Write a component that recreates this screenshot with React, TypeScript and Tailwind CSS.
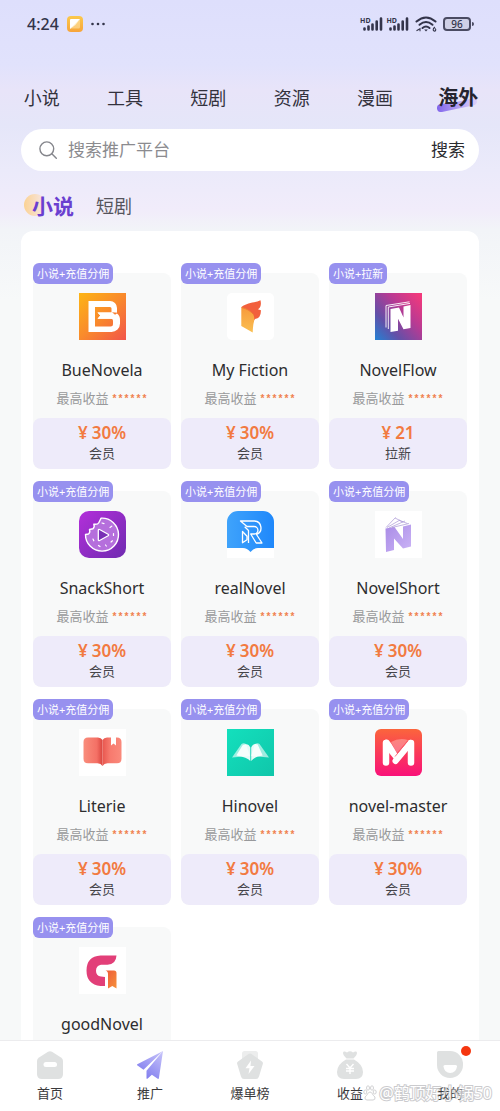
import React from 'react';

type Platform = {
  name: string;
  tag: string;
  price: string;
  kind: string;
  Logo: () => React.ReactElement;
};

function Tile({ children }: { children: React.ReactNode }) {
  return (
    <svg viewBox="0 0 47 47" className="block h-[47px] w-[47px]" aria-hidden="true">
      {children}
    </svg>
  );
}

function BueNovelaLogo() {
  return (
    <Tile>
      <defs>
        <linearGradient id="bue" gradientUnits="userSpaceOnUse" x1="0" y1="0" x2="47" y2="47">
          <stop offset="0" stopColor="#fdb515" />
          <stop offset="0.5" stopColor="#f98a2c" />
          <stop offset="1" stopColor="#f2544a" />
        </linearGradient>
      </defs>
      <rect width="47" height="47" fill="url(#bue)" />
      <path d="M9.500 8H31a7 7 0 0 1 7 7v5.500A8 8 0 0 1 41 27v3.500a8.500 8.500 0 0 1-8.500 8.500H9.500z" fill="#fff" />
      <path d="M16 14H31q1.500 0 1.500 1.500V19.500H18.500l2.800 3-2.800 3.300H32q2 0 2 2V31q0 2.500-2.500 2.500H16z" fill="url(#bue)" />
      <path d="M18.500 19.500H33l2 2.500-2 3.800H18.500l2.800-3.300z" fill="#fff" />
      <path d="M33 19.200l6 .6-3 2z" fill="url(#bue)" />
    </Tile>
  );
}

function MyFictionLogo() {
  return (
    <Tile>
      <defs>
        <linearGradient id="ficA" x1="0" y1="0" x2="0" y2="1">
          <stop offset="0" stopColor="#f79a3c" />
          <stop offset="1" stopColor="#fac052" />
        </linearGradient>
      </defs>
      <rect width="47" height="47" rx="5" fill="#fff" />
      <path d="M14.500 14C20 9.500 28 10 33.500 7.200Q35 13.500 31 16.300Q32.500 17.200 33.800 17Q34.500 25 28 26L25 31 15 15z" fill="#f2603d" />
      <path d="M14.300 14.500Q20 15 25.500 20.500Q28 23.500 27 28.500Q26 32 25.700 39.500L14.300 33z" fill="url(#ficA)" />
      <path d="M14.500 14.500Q22 16 27 22" fill="none" stroke="#ee7a35" strokeWidth="1" />
    </Tile>
  );
}

function NovelFlowLogo() {
  return (
    <Tile>
      <defs>
        <linearGradient id="flow" x1="0" y1="1" x2="1" y2="0.1">
          <stop offset="0" stopColor="#2382d4" />
          <stop offset="0.3" stopColor="#6350a8" />
          <stop offset="0.65" stopColor="#b83a93" />
          <stop offset="1" stopColor="#f2397c" />
        </linearGradient>
      </defs>
      <rect width="47" height="47" fill="url(#flow)" />
      <path d="M11 34.500V12.500L34.500 8.800" fill="none" stroke="#fff" strokeWidth="0.900" />
      <path d="M13.300 36V14L35 10.400" fill="none" stroke="#fff" strokeWidth="0.900" />
      <path d="M15.500 16l8.500-1.500 4.500 10V13.500L35.500 12v23l-7 1.300-5.500-10.500v12L15.500 39z" fill="#fff" />
    </Tile>
  );
}

function SnackShortLogo() {
  return (
    <Tile>
      <defs>
        <linearGradient id="snack" x1="0" y1="0" x2="1" y2="1">
          <stop offset="0" stopColor="#b32fda" />
          <stop offset="1" stopColor="#6f2bb0" />
        </linearGradient>
      </defs>
      <rect width="47" height="47" rx="10" fill="url(#snack)" />
      <path d="M22 7.200A16.500 16.500 0 1 1 6.500 23.500l3-.5q2-1.500 1-4.500l3.500-.8q2-2 .8-4.500 4 .5 5-1.500T22 7.200z" fill="#b56fdc" stroke="#fff" strokeWidth="1.400" strokeLinejoin="round" />
      <path d="M19.300 19.500q0-1.500 1.300-1l8.500 4.800q1 .7 0 1.400l-8.500 4.800q-1.300.5-1.300-1z" fill="#7930b5" stroke="#fff" strokeWidth="1.300" />
      <path d="M23 12l2 .6M31 16.500l1.800-1.400M34.500 22.500v2M14 28l.8 1.800M19.500 34.500l1.500 1M26.500 34l.8 1M32 31l1.500-1.200" stroke="#fff" strokeWidth="1.200" strokeLinecap="round" />
    </Tile>
  );
}

function RealNovelLogo() {
  return (
    <Tile>
      <defs>
        <linearGradient id="real" x1="0" y1="0" x2="1" y2="0">
          <stop offset="0" stopColor="#3fa3fb" />
          <stop offset="1" stopColor="#1f88fb" />
        </linearGradient>
      </defs>
      <path d="M0 30h47v17H0z" fill="#fff" />
      <path d="M0 11A11 11 0 0 1 11 0h25a11 11 0 0 1 11 11v26H31q-4 0-7.500 4Q20 37 16 37H0z" fill="url(#real)" />
      <path d="M13.500 10H27.500a7 7 0 0 1 2 13.500L35 32h-5.800l-5.500-9h3.500a3.500 3.500 0 0 0 0-7.500H20zM21.500 32V19.500l-3.800-3.800M15.500 20.500v11.300l4.500-3v-3.500z" fill="none" stroke="#fff" strokeWidth="1.300" strokeLinejoin="round" />
    </Tile>
  );
}

function NovelShortLogo() {
  return (
    <Tile>
      <defs>
        <linearGradient id="short" x1="0" y1="0" x2="1" y2="1">
          <stop offset="0" stopColor="#a98be6" />
          <stop offset="1" stopColor="#cbb4f6" />
        </linearGradient>
      </defs>
      <rect width="47" height="47" fill="#fff" />
      <path d="M10.500 17.500l9-1.500 8.500 12V15.500L36 13.500v22l-8 2L19 27.500V39l-8 2z" fill="url(#short)" />
      <path d="M11 16.500L20.500 6.500M12 16.500L25 9M14 17l16-7M17 16.500l17-4M20 7l8 4M24.500 9.500l8 3" fill="none" stroke="#a996d6" strokeWidth="0.700" />
    </Tile>
  );
}

function LiterieLogo() {
  return (
    <Tile>
      <defs>
        <linearGradient id="litA" x1="0" y1="0" x2="1" y2="0">
          <stop offset="0" stopColor="#f98d7c" />
          <stop offset="0.7" stopColor="#f47065" />
          <stop offset="1" stopColor="#d9453f" />
        </linearGradient>
        <linearGradient id="litB" x1="0" y1="0" x2="1" y2="0">
          <stop offset="0" stopColor="#e8574f" />
          <stop offset="0.4" stopColor="#f77a6e" />
          <stop offset="1" stopColor="#fa8a7c" />
        </linearGradient>
      </defs>
      <rect width="47" height="47" fill="#fff" />
      <path d="M9 8.500h10q3 0 4.500 2.500v26q-1.500-2.700-5-2.700H9q-4.500 0-4.500-4.500V13Q4.500 8.500 9 8.500z" fill="url(#litA)" />
      <path d="M38 8.500H28q-3 0-4.500 2.500v26q1.500-2.700 5-2.700H38q4.500 0 4.500-4.500V13q0-4.500-4.500-4.500z" fill="url(#litB)" />
      <path d="M32 7.500h5v9l-2.500-2-2.500 2z" fill="#fff" />
    </Tile>
  );
}

function HinovelLogo() {
  return (
    <Tile>
      <defs>
        <linearGradient id="hi" x1="0" y1="0" x2="1" y2="1">
          <stop offset="0" stopColor="#13e0bd" />
          <stop offset="1" stopColor="#10c6aa" />
        </linearGradient>
      </defs>
      <rect width="47" height="47" fill="url(#hi)" />
      <path d="M5 28.500L14.500 15q2-1.500 4.500 0L23 27z" fill="#fff" opacity="0.600" />
      <path d="M42 28.500L32.500 15q-2-1.500-4.500 0L24 27z" fill="#fff" opacity="0.600" />
      <path d="M23.300 32q-3-4-14-5.500l6.500-10.500q5.500-2.500 7.500 2.500zM24.200 32V18.500q2-5 6.500-3l5 11q-8.500 1-11.500 5.500z" fill="#fff" opacity="0.900" />
    </Tile>
  );
}

function NovelMasterLogo() {
  return (
    <Tile>
      <defs>
        <linearGradient id="master" x1="0" y1="0" x2="0" y2="1">
          <stop offset="0" stopColor="#fb653c" />
          <stop offset="0.5" stopColor="#fa3a59" />
          <stop offset="1" stopColor="#f9127a" />
        </linearGradient>
      </defs>
      <rect width="47" height="47" rx="6" fill="url(#master)" />
      <path d="M16 13q8-4.500 17-2l-11 13z" fill="#fff" opacity="0.300" />
      <path d="M8 13.500q1-4 5-2.800 2 .8 9.500 14.500L19 30l-4.500-5.500z" fill="#fff" />
      <path d="M11 14v19.500M36 14v19.500" fill="none" stroke="#fff" strokeWidth="6.500" strokeLinecap="round" />
      <path d="M35.500 14L20.500 32" fill="none" stroke="#fff" strokeWidth="6" strokeLinecap="round" />
      <path d="M20 27.500L32.500 12" stroke="#fb5b6b" strokeWidth="0.800" />
    </Tile>
  );
}

function GoodNovelLogo() {
  return (
    <Tile>
      <defs>
        <linearGradient id="goodB" x1="0" y1="0" x2="1" y2="1">
          <stop offset="0" stopColor="#ee5a3a" />
          <stop offset="1" stopColor="#f6913a" />
        </linearGradient>
      </defs>
      <rect width="47" height="47" fill="#fff" />
      <path d="M37.500 8.500q-.5 9-9 9.200H22q-5 .8-5 6 0 5.300 5 5.800l4 .5v9H21.500Q7.500 37.500 7.500 23.500T21.500 8.500z" fill="#e23f78" />
      <path d="M26.500 23.500h8.500q2.500 0 2.500 2.500v15.500L33.300 39 29 41.500V27q0-3-2.500-3.500z" fill="url(#goodB)" />
    </Tile>
  );
}

const platforms: Platform[] = [
  { name: 'BueNovela', tag: '小说+充值分佣', price: '30%', kind: '会员', Logo: BueNovelaLogo },
  { name: 'My Fiction', tag: '小说+充值分佣', price: '30%', kind: '会员', Logo: MyFictionLogo },
  { name: 'NovelFlow', tag: '小说+拉新', price: '21', kind: '拉新', Logo: NovelFlowLogo },
  { name: 'SnackShort', tag: '小说+充值分佣', price: '30%', kind: '会员', Logo: SnackShortLogo },
  { name: 'realNovel', tag: '小说+充值分佣', price: '30%', kind: '会员', Logo: RealNovelLogo },
  { name: 'NovelShort', tag: '小说+充值分佣', price: '30%', kind: '会员', Logo: NovelShortLogo },
  { name: 'Literie', tag: '小说+充值分佣', price: '30%', kind: '会员', Logo: LiterieLogo },
  { name: 'Hinovel', tag: '小说+充值分佣', price: '30%', kind: '会员', Logo: HinovelLogo },
  { name: 'novel-master', tag: '小说+充值分佣', price: '30%', kind: '会员', Logo: NovelMasterLogo },
  { name: 'goodNovel', tag: '小说+充值分佣', price: '30%', kind: '会员', Logo: GoodNovelLogo },
];

function Signal() {
  return (
    <span className="flex items-start">
      <span className="text-[7px] leading-[7px] font-bold">HD</span>
      <svg viewBox="0 0 20 14" className="-ml-2 h-[14px] w-5" aria-hidden="true">
        <path d="M1.500 12.500v-1M5.500 12.500v-3M9.500 12.500v-5M13.700 12.500v-8M18 12.500V1.500" stroke="#33344a" strokeWidth="2.600" strokeLinecap="round" />
      </svg>
    </span>
  );
}

function StatusBar() {
  return (
    <div className="flex h-12 items-center justify-between pr-[26px] pl-[27px] text-[#33344a]">
      <div className="flex items-center gap-2">
        <span className="text-[16px] leading-5 font-medium">4:24</span>
        <svg viewBox="0 0 16 16" className="h-4 w-4" aria-hidden="true">
          <defs>
            <linearGradient id="app" x1="0" y1="0" x2="0" y2="1">
              <stop offset="0" stopColor="#fbc94c" />
              <stop offset="1" stopColor="#f7a43a" />
            </linearGradient>
          </defs>
          <rect width="16" height="16" rx="4" fill="url(#app)" />
          <path d="M3 4q0-1 1-1h9L8.500 9 3 13z" fill="#fff" />
          <path d="M13 3v8q0 1.500-1.500 1.500H3.500z" fill="#fde2a8" opacity="0.600" />
        </svg>
        <svg viewBox="0 0 14 4" className="h-1 w-[14px]" aria-hidden="true">
          <circle cx="1.500" cy="2" r="1.300" fill="#33344a" />
          <circle cx="7" cy="2" r="1.300" fill="#33344a" />
          <circle cx="12.500" cy="2" r="1.300" fill="#33344a" />
        </svg>
      </div>
      <div className="flex items-center gap-1">
        <Signal />
        <Signal />
        <svg viewBox="0 0 22 16" className="ml-0.5 h-4 w-[22px]" aria-hidden="true">
          <g fill="none" stroke="#33344a" strokeWidth="2" strokeLinecap="round">
            <path d="M1.500 5.500Q11-2.500 20.500 5.500" />
            <path d="M4.500 8.800Q11 3.300 17.500 8.800" />
            <path d="M7.500 12Q11 9 14.500 12" />
          </g>
          <path d="M9.200 13.500h3.600L11 15.500z" fill="#33344a" />
          <path d="M1.500 14.800l3.500-2v2.500" fill="none" stroke="#33344a" strokeWidth="1.100" />
          <path d="M20 11q-2 1-1.800 2.800a1.300 1.300 0 1 0 1.300-1.300" fill="none" stroke="#33344a" strokeWidth="1.100" />
        </svg>
        <span className="ml-0.5 flex items-center gap-px">
          <span className="flex h-[14px] w-7 items-center justify-center rounded border-2 border-[#4a4b62] bg-[#cfd0e6] text-[10px] leading-none font-medium">
            96
          </span>
          <span className="h-1 w-0.5 rounded-r bg-[#4a4b62]" />
        </span>
      </div>
    </div>
  );
}

const categories = ['小说', '工具', '短剧', '资源', '漫画', '海外'];

function CategoryTabs() {
  return (
    <nav className="grid grid-cols-6 items-center pt-[38px]" aria-label="分类">
      {categories.map((label, i) =>
        i === categories.length - 1 ? (
          <button key={label} type="button" className="relative justify-self-center text-[20px] leading-6 font-bold text-[#25242f]">
            <svg viewBox="0 0 42 14" className="absolute top-3 -left-0.5 h-[14px] w-[42px]" aria-hidden="true">
              <defs>
                <linearGradient id="swoosh" x1="0" y1="0" x2="1" y2="0">
                  <stop offset="0" stopColor="#8266ec" />
                  <stop offset="1" stopColor="#ddd2fb" />
                </linearGradient>
              </defs>
              <path d="M4.500 6Q22 4 36 .5q5-.5 5 3 0 3-4 4Q20 11 6 14 1.500 14.500 1 10.500q-.3-4 3.500-4.500z" fill="url(#swoosh)" />
            </svg>
            <span className="relative">{label}</span>
          </button>
        ) : (
          <button key={label} type="button" className="justify-self-center text-[18px] leading-6 text-[#33323d]">
            {label}
          </button>
        ),
      )}
    </nav>
  );
}

function SearchBar() {
  return (
    <form className="mx-[21px] mt-[19px] flex h-[42px] items-center rounded-full bg-white pr-[14px] pl-[18px]" onSubmit={(e) => e.preventDefault()}>
      <svg viewBox="0 0 18 18" className="h-[18px] w-[18px] shrink-0" aria-hidden="true">
        <circle cx="7.800" cy="7.800" r="6.900" fill="none" stroke="#85868c" strokeWidth="1.400" />
        <path d="M12.800 12.800l4.500 4.500" stroke="#85868c" strokeWidth="1.400" strokeLinecap="round" />
      </svg>
      <input
        type="search"
        aria-label="搜索推广平台"
        placeholder="搜索推广平台"
        className="ml-[11px] min-w-0 flex-1 bg-transparent text-[17px] leading-6 outline-none placeholder:text-[#8b8b8f]"
      />
      <button type="submit" className="text-[17px] leading-6 text-[#2c2c30]">
        搜索
      </button>
    </form>
  );
}

function SubTabs() {
  return (
    <div className="flex h-[60px] items-center gap-[22px] pt-[10px] pl-[32px]">
      <button type="button" className="relative text-[21px] leading-6 font-bold text-[#6a3fd0]">
        <span className="absolute top-0 -left-2 h-[22px] w-[22px] rounded-full bg-linear-to-r from-[#fbd293] to-[#f6e8ea]" />
        <span className="relative">小说</span>
      </button>
      <button type="button" className="text-[18px] leading-6 text-[#55545c]">
        短剧
      </button>
    </div>
  );
}

function PlatformCard({ name, tag, price, kind, Logo }: Platform) {
  return (
    <article className="relative pt-[10px]">
      <div className="flex flex-col items-center overflow-hidden rounded-lg bg-[#f8f9f9] pt-5">
        <Logo />
        <h3 className="mt-[18px] text-[16px] leading-6 text-[#2d2d2f]">{name}</h3>
        <p className="mt-1.5 flex h-5 items-center gap-[3px] text-[13px] leading-5 text-[#98999b]">
          最高收益
          <span className="pt-1 font-['Liberation_Mono',monospace] text-[10px] leading-4 font-bold text-[#f0824e]">******</span>
        </p>
        <div className="mt-[10px] flex h-[51px] w-full flex-col items-center rounded-lg bg-[#eeebfa] pt-[5px]">
          <p className="flex gap-1 text-[17px] leading-5 font-semibold text-[#f27a41]">
            <span>¥</span>
            <span>{price}</span>
          </p>
          <p className="text-[13px] leading-5 text-[#454449]">{kind}</p>
        </div>
      </div>
      <span className="absolute top-0 left-0 rounded-md bg-[#9791ef] px-1 text-[11px] leading-[21px] text-white">{tag}</span>
    </article>
  );
}

function HomeIcon() {
  return (
    <svg viewBox="0 0 26 28" className="h-7 w-[26px]" aria-hidden="true">
      <path d="M11 .8q2-1.200 4 0l9 5.700q2 1.300 2 3.500v13q0 5-5 5H5q-5 0-5-5V10q0-2.200 2-3.500z" fill="#dfe1e1" />
      <rect x="6.500" y="11" width="13.500" height="5" rx="2.500" fill="#fff" />
    </svg>
  );
}

function PlaneIcon() {
  return (
    <svg viewBox="0 0 26 28" className="h-7 w-[26px]" aria-hidden="true">
      <defs>
        <linearGradient id="plane" x1="1" y1="0" x2="0.300" y2="1">
          <stop offset="0" stopColor="#c9c6fa" />
          <stop offset="1" stopColor="#7f7bee" />
        </linearGradient>
      </defs>
      <path d="M26 0L.3 13.200q-.7.800.2 1.300l6 4.300zM26 0L9.500 19.800v7.700q.5.700 1.200 0l4.200-3.800 5.800 4.100q1 .3 1.200-.6z" fill="url(#plane)" />
    </svg>
  );
}

function HotIcon() {
  return (
    <svg viewBox="0 0 26 28" className="h-7 w-[26px]" aria-hidden="true">
      <path d="M5 2.500Q5 0 7.500 0h11Q21 0 21 2.500V10H5z" fill="#eceded" />
      <path d="M11.500 3q1.500-1 3 0L25 10.500q1.300 1 .8 2.600L22 25.500Q21.300 28 19 28H7q-2.300 0-3-2.500L.2 13.100Q-.3 11.500 1 10.500z" fill="#dfe1e1" />
      <path d="M14 9.500l-5.500 7.700h4L11.500 23l6-8h-4z" fill="#fff" />
    </svg>
  );
}

function MoneyIcon() {
  return (
    <svg viewBox="0 0 26 28" className="h-7 w-[26px]" aria-hidden="true">
      <path d="M6 2Q6 .3 8 .6l2 .9Q13-1 16 1.500l2-.9q2-.3 2 1.400 0 2-3.500 5.500h-7Q6 4 6 2z" fill="#dfe1e1" />
      <path d="M9 8.500h8q9 5 9 12.500 0 7-7 7H7q-7 0-7-7Q0 13.500 9 8.500z" fill="#dfe1e1" />
      <path d="M9.500 13l3.500 4 3.500-4M9 17.500h8M9 20h8M13 17v6" fill="none" stroke="#fff" strokeWidth="1.400" />
    </svg>
  );
}

function MineIcon() {
  return (
    <svg viewBox="0 0 26 28" className="h-7 w-[26px]" aria-hidden="true">
      <path d="M1.500 0H13a13 13 0 0 1 13 14 13 13 0 0 1-26 0V1.500Q0 0 1.500 0z" fill="#dfe1e1" />
      <path d="M8 14h10.500q1.700 0 1.500 1.500-1 6.500-6.800 6.500T6.500 15.500Q6.300 14 8 14z" fill="#fff" />
    </svg>
  );
}

const navItems = [
  { label: '首页', Icon: HomeIcon },
  { label: '推广', Icon: PlaneIcon },
  { label: '爆单榜', Icon: HotIcon },
  { label: '收益', Icon: MoneyIcon },
  { label: '我的', Icon: MineIcon, dot: true },
];

function BottomNav() {
  return (
    <nav className="relative grid shrink-0 grid-cols-5 border-t border-[#ececee] bg-white pt-[10px] pb-2" aria-label="主导航">
      {navItems.map(({ label, Icon, dot }) => (
        <a key={label} href="#" className="flex flex-col items-center gap-1 text-[13px] leading-5 text-[#3a3a3c]">
          <span className="relative">
            <Icon />
            {dot && <span className="absolute -top-[5px] -right-2 h-[10px] w-[10px] rounded-full bg-[#f5360f]" />}
          </span>
          {label}
        </a>
      ))}
      <div className="pointer-events-none absolute right-2 bottom-2 flex items-center gap-0.5 opacity-60">
        <svg viewBox="0 0 14 16" className="h-4 w-[14px]" aria-hidden="true">
          <g fill="#fff" stroke="#b5b5b8" strokeWidth="1">
            <ellipse cx="2.300" cy="7" rx="1.500" ry="2" />
            <ellipse cx="5" cy="3" rx="1.500" ry="2.200" />
            <ellipse cx="9" cy="3" rx="1.500" ry="2.200" />
            <ellipse cx="11.700" cy="7" rx="1.500" ry="2" />
            <path d="M7 7q1.500 0 2.500 2t2.500 3q.5 3-2 3H4q-2.500 0-2-3 1.500-1 2.500-3T7 7z" />
          </g>
        </svg>
        <span className="text-[16px] leading-5 text-white [-webkit-text-stroke:2px_#aaaaae] [paint-order:stroke_fill]">@鹤顶好小锅50</span>
      </div>
    </nav>
  );
}

export default function App() {
  return (
    <div className="flex h-screen flex-col bg-[#f7f9f9] font-['Noto_Sans','Noto_Sans_CJK_SC',sans-serif]">
      <div className="flex min-h-0 flex-1 flex-col overflow-hidden bg-[linear-gradient(180deg,#dedffc_0px,#e1e2fc_65px,#e8e4f9_90px,#e5e6f9_125px,#ebeafa_170px,#f1ecfa_210px,#f2f4f8_230px,#f7f9f9_300px)]">
        <StatusBar />
        <CategoryTabs />
        <SearchBar />
        <SubTabs />
        <main className="mx-[21px] min-h-0 flex-1 overflow-hidden rounded-t-xl bg-white px-3 pt-8">
          <div className="grid grid-cols-3 gap-x-[10px] gap-y-3">
            {platforms.map((p) => (
              <PlatformCard key={p.name} {...p} />
            ))}
          </div>
        </main>
      </div>
      <BottomNav />
    </div>
  );
}
